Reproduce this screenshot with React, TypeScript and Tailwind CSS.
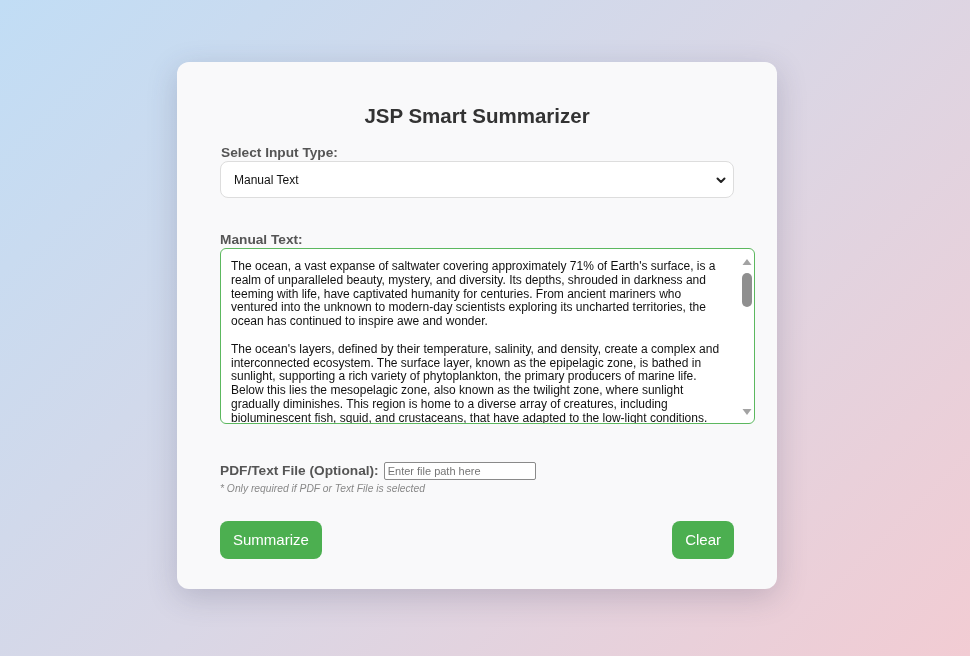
import React from "react";

const P1 =
  "The ocean, a vast expanse of saltwater covering approximately 71% of Earth's surface, is a realm of unparalleled beauty, mystery, and diversity. Its depths, shrouded in darkness and teeming with life, have captivated humanity for centuries. From ancient mariners who ventured into the unknown to modern-day scientists exploring its uncharted territories, the ocean has continued to inspire awe and wonder.";
const P2 =
  "The ocean's layers, defined by their temperature, salinity, and density, create a complex and interconnected ecosystem. The surface layer, known as the epipelagic zone, is bathed in sunlight, supporting a rich variety of phytoplankton, the primary producers of marine life. Below this lies the mesopelagic zone, also known as the twilight zone, where sunlight gradually diminishes. This region is home to a diverse array of creatures, including bioluminescent fish, squid, and crustaceans, that have adapted to the low-light conditions.";

export default function App() {
  return (
    <div
      className="min-h-[656px] w-full flex justify-center items-start pt-[62px] pr-[16px]"
      style={{ fontFamily: '"Liberation Sans", Arial, sans-serif' }}
    >
      <div className="fixed inset-0 -z-10 bg-[linear-gradient(135deg,#c1ddf5_0%,#d9d7e6_50%,#f2ccd3_100%)]" />
      <div className="w-[600px] rounded-[12px] bg-[#f9f9fa] shadow-[0_8px_30px_rgba(60,60,90,0.22)] px-[43px] pt-[42px] pb-[30px]">
        <h1 className="text-center text-[20.5px] leading-[23px] font-bold text-[#333]">
          JSP Smart Summarizer
        </h1>
        <div className="mt-[18px] text-[13.7px] leading-[16px] font-bold text-[#555] pl-[1px]">
          Select Input Type:
        </div>
        <div className="h-[37px] rounded-[8px] border border-[#ddd] bg-white flex items-center justify-between pl-[13px] pr-[4px]">
          <span className="text-[12px] text-[#111]">Manual Text</span>
          <svg width="16" height="16" viewBox="0 0 16 16" className="text-[#222]">
            <path d="M4.5 6.5 L8 10 L11.5 6.5" fill="none" stroke="currentColor" strokeWidth="2" strokeLinecap="round" strokeLinejoin="round" />
          </svg>
        </div>
        <div className="mt-[34px] text-[13.7px] leading-[16px] font-bold text-[#555]">
          Manual Text:
        </div>
        <div className="w-[535px] h-[176px] rounded-[6px] border border-[#5cb85f] bg-white flex overflow-hidden">
          <div className="w-[518px] overflow-hidden pl-[10px] pr-[10px] pt-[11px] text-[12px] leading-[13.8px] text-[#111]">
            <p>{P1}</p>
            <p className="mt-[13.8px]">{P2}</p>
          </div>
          <div className="w-[15px] flex flex-col items-center pt-[9px] pb-[7px]">
            <svg width="10" height="8" viewBox="0 0 10 8">
              <path d="M5 1 L9.5 7 L0.5 7 Z" fill="#a3a3a3" />
            </svg>
            <div className="mt-[7px] w-[10px] h-[34px] rounded-full bg-[#8f8f8f]" />
            <div className="flex-1" />
            <svg width="10" height="8" viewBox="0 0 10 8">
              <path d="M0.5 1 L9.5 1 L5 7 Z" fill="#a3a3a3" />
            </svg>
          </div>
        </div>
        <div className="mt-[38px] flex items-center">
          <span className="text-[13.7px] leading-[16px] font-bold text-[#555]">PDF/Text File (Optional):</span>
          <div className="ml-[5px] w-[152px] h-[18px] border border-[#8a8a8a] rounded-[2px] bg-white flex items-center px-[3px]">
            <span className="text-[11px] text-[#757575]">Enter file path here</span>
          </div>
        </div>
        <div className="mt-[2px] text-[10.3px] leading-[13px] italic text-[#888]">
          * Only required if PDF or Text File is selected
        </div>
        <div className="mt-[26px] flex justify-between">
          <button className="h-[38px] px-[13px] rounded-[8px] bg-[#4caf50] text-white text-[15px]">
            Summarize
          </button>
          <button className="h-[38px] px-[13px] rounded-[8px] bg-[#4caf50] text-white text-[15px]">
            Clear
          </button>
        </div>
      </div>
    </div>
  );
}
